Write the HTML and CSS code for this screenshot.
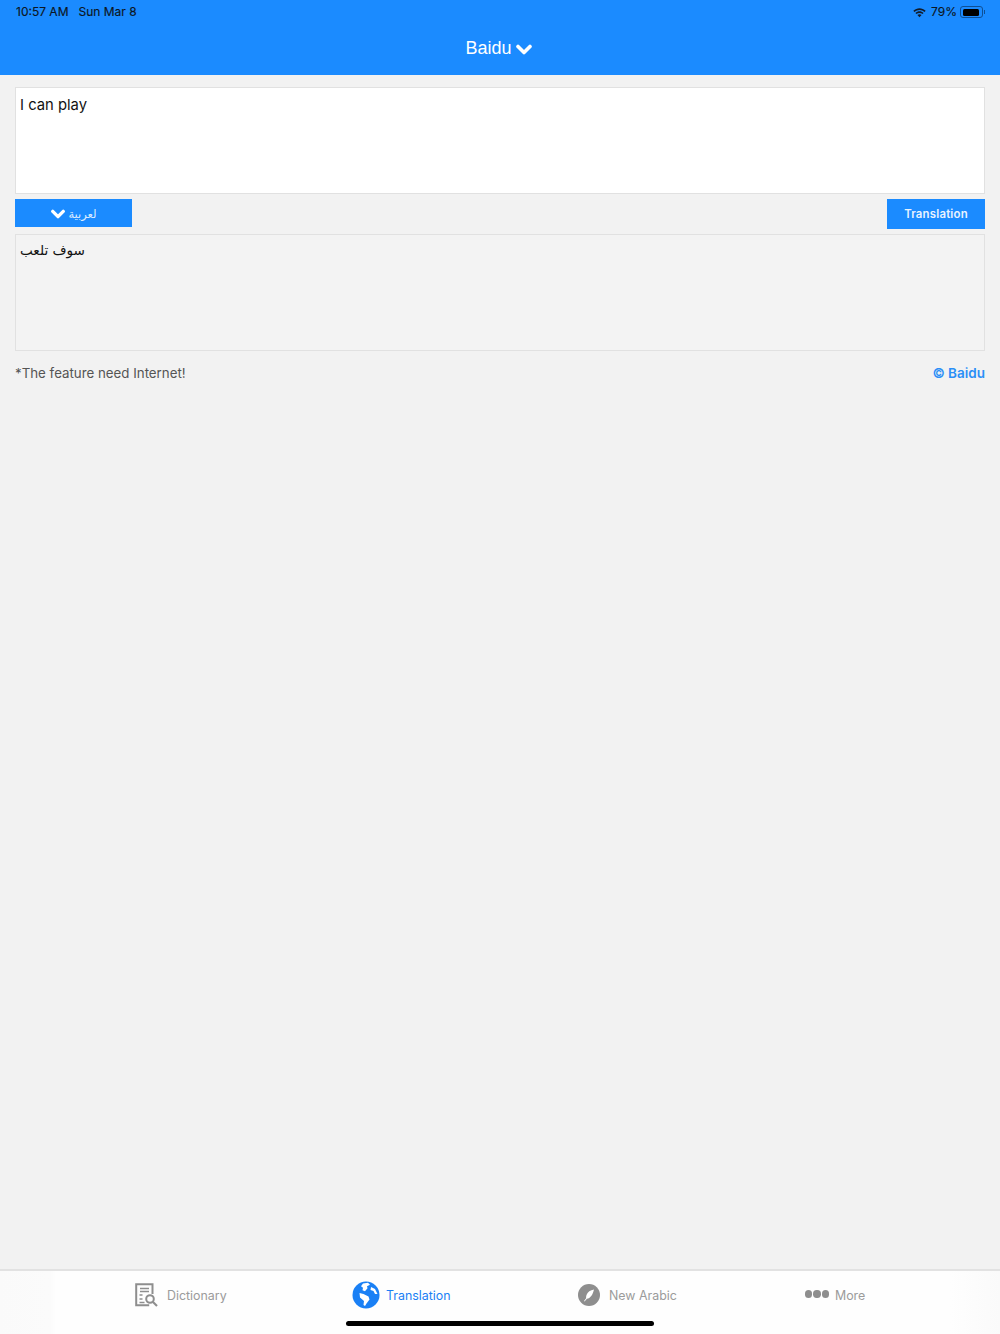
FILE: index.html
```html
<!DOCTYPE html>
<html lang="en">
<head>
<meta charset="utf-8">
<title>Baidu Translation</title>
<link rel="stylesheet" href="styles.css">
</head>
<body>
<div class="app">
  <header class="header">
    <div class="status">
      <div class="status-left"><span>10:57 AM</span><span>Sun Mar 8</span></div>
      <div class="status-right">
        <svg class="wifi" width="13" height="11" viewBox="0 0 15 12"><path d="M.4 4.1C4.4.2 10.6.2 14.6 4.1l-1.2 1.3C10 2.2 5 2.2 1.6 5.400z" fill="#111c2c"/><path d="M2.800 6.500c2.700-2.500 6.700-2.500 9.400 0l-1.200 1.300c-2-1.800-5-1.800-7 0z" fill="#111c2c"/><path d="M5.100 8.900c1.400-1.200 3.400-1.200 4.800 0L7.500 11.500z" fill="#111c2c"/></svg>
        <span class="pct">79%</span>
        <span class="battery"><span class="battery-fill"></span></span><span class="battery-cap"></span>
      </div>
    </div>
    <div class="title">
      <span>Baidu</span>
      <svg class="chev chev-lg" viewBox="0 0 16 11"><path d="M2 2.500l6 6 6-6" /></svg>
    </div>
  </header>

  <main class="main">
    <div class="box box-input">I can play</div>
    <div class="controls">
      <button class="lang">
        <svg class="chev chev-sm" viewBox="0 0 16 11"><path d="M2 2.500l6 6 6-6" /></svg>
        <span lang="ar" dir="rtl">لعربية</span>
      </button>
      <button class="translate">Translation</button>
    </div>
    <div class="box box-output" lang="ar"><span dir="rtl">سوف تلعب</span></div>
    <div class="note">
      <span>*The feature need Internet!</span>
      <span class="credit">© Baidu</span>
    </div>
  </main>

  <nav class="tabs">
    <div class="tab">
      <svg class="ic-dict" width="23" height="24" viewBox="0 0 23 24" fill="none" stroke="#8e8e8e">
        <path d="M17.500 11V1.200H1.200v21h13" stroke-width="2"/>
        <path d="M5 5.500h9M5 8.500h9M4.500 12h3M4.500 16h3M4.500 19.500h5" stroke-width="1.500"/>
        <circle cx="15" cy="16" r="3.800" stroke-width="2"/>
        <path d="M18 19l4 4" stroke-width="2.200"/>
      </svg>
      <span class="tab-label dict-label">Dictionary</span>
    </div>
    <div class="tab tab-active">
      <svg width="28" height="28" viewBox="0 0 28 28">
        <circle cx="14" cy="14" r="13.500" fill="#1a80f5"/>
        <path d="M11 2.500l5-.8 2 2-3 1.500.5 2-2.500 3-2.500-1 .5-2.500-2-1.500zM19 6l4 2 2.500 5-2.500 0-1.500-3-3-1zM7.500 12l4 1 5 2.500 1 3-3 4-1.500 2.500-1.500-1 .5-4-4-3.500z" fill="#fff"/>
      </svg>
      <span class="tab-label label-active">Translation</span>
    </div>
    <div class="tab">
      <svg width="22" height="22" viewBox="0 0 22 22">
        <circle cx="11" cy="11" r="11" fill="#8e8e8e"/>
        <path d="M16 5.500c-3.500.5-6.500 2.500-7.500 5.500-.4 1.300-.5 2.500-.4 3.300L6 17l.6.500 2.300-2.700c3.300-.2 6-4.200 7.100-9.300z" fill="#fff"/>
      </svg>
      <span class="tab-label arabic-label">New Arabic</span>
    </div>
    <div class="tab">
      <span class="dots"><i></i><i></i><i></i></span>
      <span class="tab-label more-label">More</span>
    </div>
    <div class="home-bar"></div>
  </nav>
</div>
</body>
</html>
```

FILE: styles.css
```css
* { box-sizing: border-box; }
html, body { margin: 0; padding: 0; }
body {
  font-family: Inter, "Liberation Sans", "Noto Sans", sans-serif;
  background: #f2f2f2;
}
.app {
  width: 1000px;
  height: 1334px;
  display: flex;
  flex-direction: column;
  overflow: hidden;
}
.header {
  height: 75px;
  flex: none;
  background: #1b8bff;
  padding: 5px 15px 0 16px;
}
.status {
  height: 14px;
  display: flex;
  justify-content: space-between;
  align-items: center;
  font-size: 12px;
  line-height: 14px;
  color: #0d1622;
  -webkit-text-stroke: .15px #0d1622;
}
.status-left { display: flex; gap: 10px; }
.status-right { display: flex; align-items: center; }
.wifi { margin-right: 5px; }
.pct { margin-right: 3px; }
.battery {
  width: 23px;
  height: 12px;
  border: 1px solid #0e4f94;
  border-radius: 3px;
  padding: 1.500px;
  display: block;
}
.battery-fill {
  display: block;
  width: 16px;
  height: 7px;
  background: #000;
  border-radius: 1.500px;
}
.battery-cap {
  width: 1px;
  height: 4px;
  background: #0e4f94;
  margin-left: 1px;
}
.title {
  margin-top: 18px;
  display: flex;
  justify-content: center;
  align-items: center;
  gap: 4px;
  color: #fff;
  font-family: "Liberation Sans", sans-serif;
  font-size: 18px;
  line-height: 22px;
  padding-right: 4px;
}
.chev { fill: none; stroke: #fff; stroke-linecap: round; stroke-linejoin: round; }
.chev-lg { width: 16px; height: 11px; stroke-width: 3.600; margin-top: 2px; }
.chev-sm { width: 14px; height: 10px; stroke-width: 3.800; }

.main {
  flex: 1;
  padding: 12px 15px 0;
  display: flex;
  flex-direction: column;
}
.box {
  border: 1px solid #e1e1e1;
  padding: 8px 4px;
  font-size: 14.800px;
  line-height: 19px;
  color: #111;
}
.box-input { height: 107px; background: #fff; }
.controls {
  margin-top: 5px;
  display: flex;
  justify-content: space-between;
  align-items: flex-start;
}
button {
  border: 0;
  padding: 0;
  background: #1b8bff;
  color: #fff;
  font-family: inherit;
  display: flex;
  align-items: center;
  justify-content: center;
}
.lang {
  width: 117px;
  height: 28px;
  gap: 3px;
  padding: 1px 0 0 1px;
  font-family: "Noto Sans", "DejaVu Sans", sans-serif;
  font-size: 11.500px;
  color: #dcecff;
}
.translate {
  width: 98px;
  height: 30px;
  font-size: 11.400px;
  font-weight: 600;
  letter-spacing: .2px;
  color: #e8f3ff;
}
.box-output {
  margin-top: 5px;
  height: 117px;
  padding-top: 6px;
  background: #f3f3f3;
  font-family: "DejaVu Sans", "Noto Sans", sans-serif;
  font-size: 13.600px;
}
.note {
  margin-top: 13px;
  display: flex;
  justify-content: space-between;
  font-size: 13.300px;
  line-height: 18px;
  color: #555;
}
.credit { color: #2b8ff7; font-weight: 600; font-size: 13.500px; }

.tabs {
  position: relative;
  flex: none;
  height: 65px;
  border-top: 2px solid #e2e2e2;
  background: linear-gradient(90deg, #fafafa 0, #fbfbfb 50px, #fefefe 56px, #fefefe 950px, #fafafa 1000px);
  display: grid;
  grid-template-columns: 217px 226px 227px auto;
  padding: 9px 0 0 135px;
  align-items: start;
}
.tab { display: flex; align-items: center; height: 30px; }
.tab-label { font-size: 12.400px; line-height: 16px; color: #9b9b9b; padding-top: 2px; }
.dict-label { margin-left: 9px; }
.label-active { color: #1a80f5; margin-left: 6px; }
.arabic-label { margin-left: 9px; }
.more-label { margin-left: 6px; }
.dots { display: flex; gap: 1px; width: 24px; margin-top: -2px; }
.dots i { width: 7.330px; height: 7.330px; border-radius: 50%; background: #8e8e8e; }
.home-bar {
  position: absolute;
  left: 346px;
  top: 50px;
  width: 308px;
  height: 5px;
  background: #000;
  border-radius: 3px;
}
```
